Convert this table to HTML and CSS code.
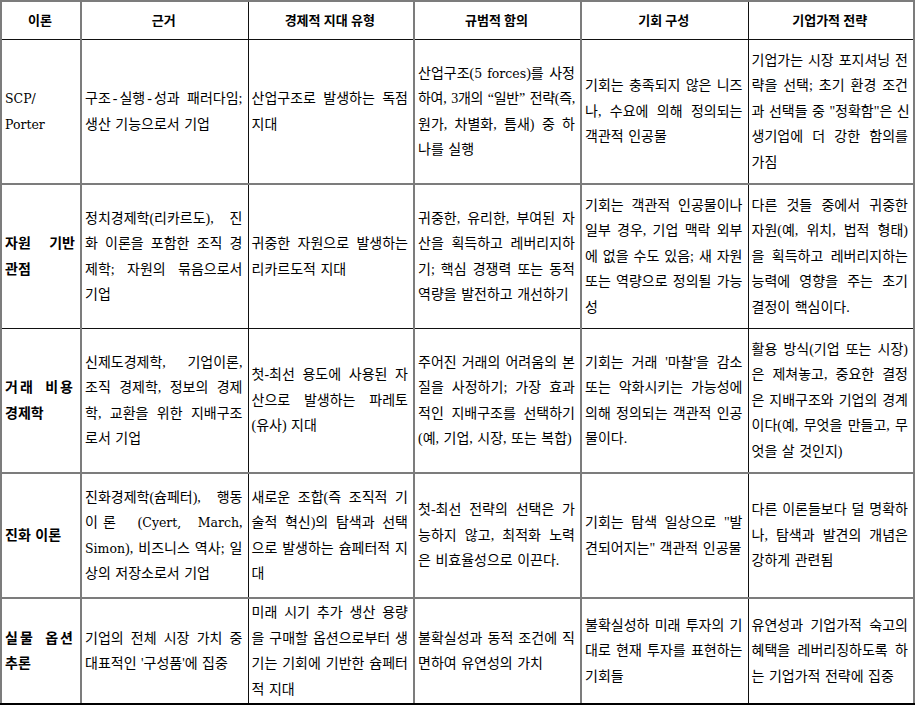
FILE: index.html
```html
<!DOCTYPE html>
<html lang="ko">
<head>
<meta charset="utf-8">
<title>기업가적 전략 이론 비교</title>
<link rel="stylesheet" href="styles.css">
</head>
<body>
<table class="grid">
  <colgroup>
    <col class="w-theory"><col class="w-a"><col class="w-b"><col class="w-a"><col class="w-a"><col class="w-b">
  </colgroup>
  <thead>
    <tr>
      <th>이론</th><th>근거</th><th>경제적 지대 유형</th><th>규범적 함의</th><th>기회 구성</th><th>기업가적 전략</th>
    </tr>
  </thead>
  <tbody>
    <tr class="r-tall">
      <td class="name plain"><span class="ln lat">SCP/</span><span class="ln lat">Porter</span></td>
      <td><span class="ln">구조<span class="dash">-</span>실행<span class="dash">-</span>성과 패러다임;</span><span class="ln">생산 기능으로서 기업</span></td>
      <td><span class="ln">산업구조로 발생하는 독점</span><span class="ln">지대</span></td>
      <td><span class="ln">산업구조(<span class="lat">5 forces</span>)를 사정</span><span class="ln tight">하여, 3개의 “일반” 전략(즉,</span><span class="ln">원가, 차별화, 틈새) 중 하</span><span class="ln">나를 실행</span></td>
      <td><span class="ln">기회는 충족되지 않은 니즈</span><span class="ln">나, 수요에 의해 정의되는</span><span class="ln">객관적 인공물</span></td>
      <td><span class="ln">기업가는 시장 포지셔닝 전</span><span class="ln">략을 선택; 초기 환경 조건</span><span class="ln">과 선택들 중 "정확함"은 신</span><span class="ln">생기업에 더 강한 함의를</span><span class="ln">가짐</span></td>
    </tr>
    <tr class="r-tall">
      <td class="name"><span class="ln">자원 기반</span><span class="ln">관점</span></td>
      <td><span class="ln">정치경제학(리카르도), 진</span><span class="ln">화 이론을 포함한 조직 경</span><span class="ln">제학; 자원의 묶음으로서</span><span class="ln">기업</span></td>
      <td><span class="ln">귀중한 자원으로 발생하는</span><span class="ln">리카르도적 지대</span></td>
      <td><span class="ln">귀중한, 유리한, 부여된 자</span><span class="ln">산을 획득하고 레버리지하</span><span class="ln">기; 핵심 경쟁력 또는 동적</span><span class="ln">역량을 발전하고 개선하기</span></td>
      <td><span class="ln">기회는 객관적 인공물이나</span><span class="ln">일부 경우, 기업 맥락 외부</span><span class="ln">에 없을 수도 있음; 새 자원</span><span class="ln">또는 역량으로 정의될 가능</span><span class="ln">성</span></td>
      <td><span class="ln">다른 것들 중에서 귀중한</span><span class="ln">자원(예, 위치, 법적 형태)</span><span class="ln">을 획득하고 레버리지하는</span><span class="ln">능력에 영향을 주는 초기</span><span class="ln">결정이 핵심이다.</span></td>
    </tr>
    <tr class="r-tall">
      <td class="name"><span class="ln spread">거래 비용</span><span class="ln">경제학</span></td>
      <td><span class="ln">신제도경제학, 기업이론,</span><span class="ln">조직 경제학, 정보의 경제</span><span class="ln">학, 교환을 위한 지배구조</span><span class="ln">로서 기업</span></td>
      <td><span class="ln">첫-최선 용도에 사용된 자</span><span class="ln">산으로 발생하는 파레토</span><span class="ln">(유사) 지대</span></td>
      <td><span class="ln">주어진 거래의 어려움의 본</span><span class="ln">질을 사정하기; 가장 효과</span><span class="ln">적인 지배구조를 선택하기</span><span class="ln">(예, 기업, 시장, 또는 복합)</span></td>
      <td><span class="ln">기회는 거래 '마찰'을 감소</span><span class="ln">또는 악화시키는 가능성에</span><span class="ln">의해 정의되는 객관적 인공</span><span class="ln">물이다.</span></td>
      <td><span class="ln">활용 방식(기업 또는 시장)</span><span class="ln">은 제쳐놓고, 중요한 결정</span><span class="ln">은 지배구조와 기업의 경계</span><span class="ln">이다(예, 무엇을 만들고, 무</span><span class="ln">엇을 살 것인지)</span></td>
    </tr>
    <tr class="r-mid">
      <td class="name"><span class="ln">진화 이론</span></td>
      <td><span class="ln">진화경제학(슘페터), 행동</span><span class="ln"><span class="spaced">이론</span> (<span class="lat">Cyert, March</span>,</span><span class="ln"><span class="lat">Simon</span>), 비즈니스 역사; 일</span><span class="ln">상의 저장소로서 기업</span></td>
      <td><span class="ln">새로운 조합(즉 조직적 기</span><span class="ln">술적 혁신)의 탐색과 선택</span><span class="ln">으로 발생하는 슘페터적 지</span><span class="ln">대</span></td>
      <td><span class="ln">첫-최선 전략의 선택은 가</span><span class="ln">능하지 않고, 최적화 노력</span><span class="ln">은 비효율성으로 이끈다.</span></td>
      <td><span class="ln">기회는 탐색 일상으로 "발</span><span class="ln">견되어지는" 객관적 인공물</span></td>
      <td><span class="ln">다른 이론들보다 덜 명확하</span><span class="ln">나, 탐색과 발견의 개념은</span><span class="ln">강하게 관련됨</span></td>
    </tr>
    <tr class="r-short">
      <td class="name"><span class="ln spread">실물 옵션</span><span class="ln">추론</span></td>
      <td><span class="ln">기업의 전체 시장 가치 중</span><span class="ln">대표적인 '구성품'에 집중</span></td>
      <td><span class="ln">미래 시기 추가 생산 용량</span><span class="ln">을 구매할 옵션으로부터 생</span><span class="ln">기는 기회에 기반한 슘페터</span><span class="ln">적 지대</span></td>
      <td><span class="ln">불확실성과 동적 조건에 직</span><span class="ln">면하여 유연성의 가치</span></td>
      <td><span class="ln">불확실성하 미래 투자의 기</span><span class="ln">대로 현재 투자를 표현하는</span><span class="ln">기회들</span></td>
      <td><span class="ln">유연성과 기업가적 숙고의</span><span class="ln">혜택을 레버리징하도록 하</span><span class="ln">는 기업가적 전략에 집중</span></td>
    </tr>
  </tbody>
</table>
</body>
</html>
```

FILE: styles.css
```css
html, body {
  margin: 0;
  background: #fff;
}

body {
  font-family: "Liberation Serif", "Noto Sans CJK KR", serif;
  font-size: 13px;
  color: #000;
}

.grid {
  border-collapse: collapse;
  table-layout: fixed;
  width: 915px;
}

.w-theory { width: 80px; }
.w-a { width: 167px; }
.w-b { width: 166px; }

.grid th,
.grid td {
  border: 1px solid #111;
  vertical-align: middle;
  padding: 0 5px 0 3px;
  line-height: 25.5px;
}

.grid th {
  height: 37px;
  font-weight: bold;
  text-align: center;
  border-top: 2px solid #7c7c7c;
}

.grid td {
  font-size: 14px;
  word-spacing: 1px;
}

/* soft (grey, 2px) vertical rules */
.grid th:nth-child(1), .grid td:nth-child(1),
.grid th:nth-child(2), .grid td:nth-child(2),
.grid th:nth-child(4), .grid td:nth-child(4),
.grid th:nth-child(5), .grid td:nth-child(5) {
  border-left: 2px solid #7c7c7c;
}
.grid th:nth-child(6), .grid td:nth-child(6) {
  border-right: 2px solid #7c7c7c;
}

.r-tall td { height: 143px; }
.r-mid td { height: 123px; }
.r-short td { height: 104px; }

.grid tbody tr:nth-child(1) td,
.grid tbody tr:nth-child(3) td,
.grid tbody tr:nth-child(4) td {
  border-bottom: 2px solid #7c7c7c;
}
.grid tbody tr:last-child td {
  border-bottom: 2px solid #000;
}

.ln {
  display: block;
  white-space: nowrap;
  text-align: justify;
  text-align-last: justify;
}
.ln:last-child {
  text-align-last: left;
}
.tight {
  word-spacing: -1px;
  letter-spacing: -0.3px;
}

/* Latin words set in a wide serif, as in the source document */
.lat {
  font-family: "DejaVu Serif", "Liberation Serif", serif;
  font-size: 12.5px;
  word-spacing: 0;
}

.dash {
  padding: 0 2px;
}

.spaced {
  letter-spacing: 5px;
}

.name {
  font-weight: bold;
  padding-right: 4px;
}
.name.plain {
  font-weight: normal;
}

.spread {
  letter-spacing: 2px;
}
```
